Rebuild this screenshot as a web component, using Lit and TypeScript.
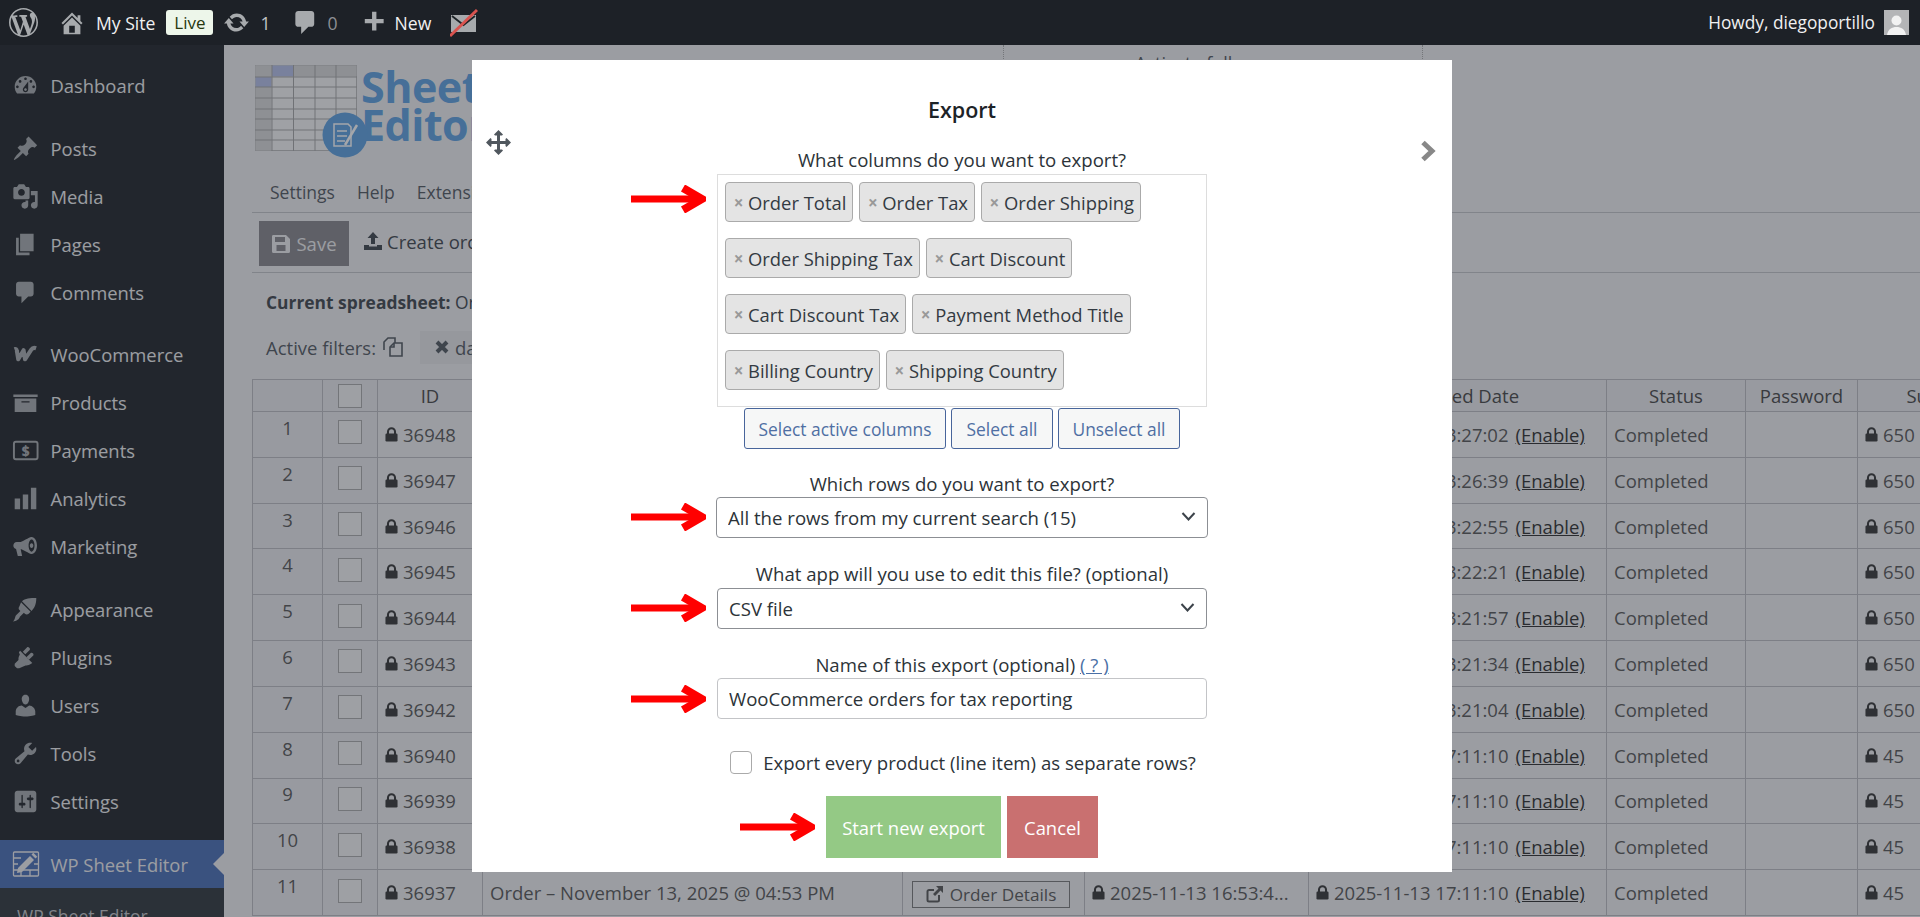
import { LitElement, html, css } from "lit";
import { customElement } from "lit/decorators.js";

const P = {
  wp: "M20 10c0-5.510-4.490-10-10-10C4.480 0 0 4.490 0 10c0 5.520 4.480 10 10 10 5.510 0 10-4.480 10-10zM7.780 15.370L4.370 6.220c.55-.02 1.170-.08 1.170-.08.5-.06.44-1.130-.06-1.110 0 0-1.450.11-2.370.11-.18 0-.37 0-.58-.01C4.120 2.690 6.890 1.030 10 1.030c2.320 0 4.430.87 6.030 2.340-.68-.11-1.650.39-1.650 1.580 0 .74.45 1.360.9 2.100.35.61.55 1.360.55 2.460 0 1.490-1.400 5-1.400 5l-3.030-8.370c.54-.02.82-.17.82-.17.5-.05.44-1.250-.06-1.220 0 0-1.440.12-2.380.12-.87 0-2.330-.12-2.330-.12-.5-.03-.56 1.200-.06 1.220l.92.08 1.260 3.410zM17.410 10c.24-.64.74-1.870.43-4.250.7 1.290 1.050 2.710 1.050 4.250 0 3.290-1.730 6.240-4.400 7.780.97-2.590 1.940-5.200 2.920-7.780zM6.100 18.090C3.120 16.650 1.110 13.530 1.110 10c0-1.300.23-2.480.72-3.590C3.250 10.300 4.670 14.200 6.100 18.090zm4.030-6.630l2.580 6.980c-.85.290-1.770.45-2.710.45-.79 0-1.570-.11-2.290-.33.81-2.380 1.620-4.740 2.420-7.100z",
  home: "M16 8.500l1.530 1.530-1.060 1.060L10 4.620l-6.470 6.470-1.060-1.060L10 2.500l4 4v-2h2v4zm-6-2.460l6 5.990V18H4v-5.970zM12 17v-5H8v5h4z",
  updates: "M10.200 3.280c3.530 0 6.430 2.610 6.920 6h2.080l-3.500 4-3.500-4h2.320c-.45-1.970-2.210-3.440-4.320-3.440-1.450 0-2.730.71-3.540 1.780L4.950 5.660C6.230 4.200 8.110 3.280 10.200 3.280zm-.4 13.440c-3.520 0-6.430-2.610-6.920-6H.8l3.500-4c1.170 1.330 2.330 2.670 3.500 4H5.480c.45 1.970 2.210 3.440 4.320 3.440 1.450 0 2.730-.71 3.540-1.780l1.710 1.950c-1.280 1.460-3.150 2.390-5.250 2.390z",
  comment: "M5 2h9c1.100 0 2 .9 2 2v7c0 1.100-.9 2-2 2h-2l-5 5v-5H5c-1.100 0-2-.9-2-2V4c0-1.100.9-2 2-2z",
  plus: "M17 7.500v3h-5v5H9v-5H4v-3h5v-5h3v5h5z",
  dashboard: "M3.760 16h12.480c1.100-1.370 1.760-3.110 1.760-5 0-4.420-3.580-8-8-8s-8 3.580-8 8c0 1.890.66 3.630 1.760 5zM10 4c.55 0 1 .45 1 1s-.45 1-1 1-1-.45-1-1 .45-1 1-1zM6 6c.55 0 1 .45 1 1s-.45 1-1 1-1-.45-1-1 .45-1 1-1zm8 0c.55 0 1 .45 1 1s-.45 1-1 1-1-.45-1-1 .45-1 1-1zm-5.370 5.550L12 7v6c0 1.100-.9 2-2 2s-2-.9-2-2c0-.57.24-1.080.63-1.450zM4 10c.55 0 1 .45 1 1s-.45 1-1 1-1-.45-1-1 .45-1 1-1zm12 0c.55 0 1 .45 1 1s-.45 1-1 1-1-.45-1-1 .45-1 1-1zm-5 3c0-.55-.45-1-1-1s-1 .45-1 1 .45 1 1 1 1-.45 1-1z",
  pin: "M10.440 3.020l1.820-1.820 6.360 6.350-1.830 1.820c-1.050-.68-2.480-.57-3.410.36l-.75.75c-.92.930-1.040 2.350-.35 3.410l-1.830 1.820-2.410-2.410-2.800 2.790c-.42.420-3.380 2.710-3.800 2.290s1.860-3.390 2.280-3.810l2.790-2.790L4.100 9.360l1.830-1.820c1.050.69 2.480.57 3.400-.36l.75-.75c.93-.92 1.050-2.350.36-3.410z",
  media: "M13 11V4c0-.55-.45-1-1-1h-1.670L9 1H5L3.670 3H2c-.55 0-1 .45-1 1v7c0 .55.45 1 1 1h10c.55 0 1-.45 1-1zM7 4.500c1.380 0 2.500 1.120 2.500 2.500S8.380 9.500 7 9.500 4.500 8.380 4.500 7 5.620 4.500 7 4.500zM14 6h5v10.500c0 1.380-1.120 2.500-2.500 2.500S14 17.880 14 16.500s1.120-2.500 2.500-2.500c.17 0 .34.020.5.050V9h-3V6zm-4 8.050V13h2v3.500c0 1.380-1.120 2.500-2.500 2.500S7 17.880 7 16.500 8.120 14 9.500 14c.17 0 .34.020.5.050z",
  page: "M6 15V2h10v13H6zm-1 1h8v2H3V5h2v11z",
  archive: "M19 4v2H1V4h18zM2 7h16v10H2V7zm11 3V9H7v1h6z",
  bars: "M18 18V2h-4v16h4zm-6 0V7H8v11h4zm-6 0v-8H2v8h4z",
  mega: "M14.500 3c-1.200 0-2 .8-8 3.700H3.500C2.100 6.700 1 7.900 1 9.300c0 1.200.8 2.200 2 2.500l1.300 5.200h3.200L6.400 12h.6c5.500 2.600 6.400 3.500 7.500 3.500 2.300 0 4-2.700 4-6.200S16.800 3 14.500 3zm0 1.800c1.200 0 2.200 2 2.200 4.500s-1 4.500-2.200 4.500-2.200-2-2.200-4.500 1-4.500 2.200-4.500zm0 2.700c-.8 0-1.300.8-1.300 1.800s.5 1.800 1.300 1.800 1.300-.8 1.300-1.800-.5-1.800-1.300-1.800z",
  brush: "M14.480 11.060L7.410 3.970C9.600 1.800 13.500 1.500 18 1.500c0 4.500-1.300 7.400-3.520 9.560zM6.700 4.680l7.070 7.070-1.410 1.410c-.78.78-2.050.78-2.830 0l-.71-.71-3 3c-.2 1.500-2.500 3.500-5.300 3.500 1.600-1 1.600-2.800 2-3.800.2-.5.5-.8.700-1l3-3-.71-.71c-.78-.78-.78-2.050 0-2.830z",
  plug: "M13.110 4.360L9.870 7.600 8 5.730l3.240-3.240c.35-.34 1.050-.2 1.560.32.52.51.66 1.210.31 1.550zm-8 1.770l.91-1.120 9.010 9.010-1.190.84c-.71.71-2.630 1.160-3.820 1L5.350 18H3.730L2 16.270v-1.620l2.810-2.780c-.17-1.200.29-3.120 1-3.830l-.7-1.910zm5.530 3.690l3.240-3.240c.35-.34 1.050-.2 1.560.31.52.51.66 1.210.31 1.560l-3.240 3.240z",
  users: "M10 9.250c-2.270 0-2.730-3.440-2.730-3.440C7 4.020 7.820 2 9.970 2c2.160 0 2.980 2.020 2.710 3.810 0 0-.41 3.440-2.680 3.440zm0 2.570L12.720 10c2.390 0 4.520 2.330 4.520 4.530v2.490s-3.650 1.130-7.240 1.130c-3.650 0-7.240-1.130-7.240-1.130v-2.490c0-2.250 1.940-4.480 4.470-4.480z",
  tools: "M16.680 9.770c-1.340 1.340-3.300 1.670-4.950.99l-5.410 6.520c-.99.99-2.590.99-3.570 0-.99-.99-.99-2.590 0-3.570l6.520-5.420c-.68-1.650-.35-3.610.99-4.950 1.280-1.280 3.120-1.620 4.720-1.060l-2.890 2.890 2.820 2.820 2.860-2.870c.53 1.580.18 3.420-1.090 4.650zM3.810 16.210c.4.390 1.040.39 1.430 0 .4-.4.4-1.040 0-1.430-.39-.4-1.030-.4-1.430 0-.39.39-.39 1.030 0 1.430z",
  settings: "M18 16V4c0-1.100-.9-2-2-2H4c-1.100 0-2 .9-2 2v12c0 1.100.9 2 2 2h12c1.100 0 2-.9 2-2zM8 11h1c.55 0 1 .45 1 1s-.45 1-1 1H8v1.500c0 .28-.22.5-.5.5s-.5-.22-.5-.5V13H6c-.55 0-1-.45-1-1s.45-1 1-1h1V5.500c0-.28.22-.5.5-.5s.5.22.5.5V11zm5-2h-1c-.55 0-1-.45-1-1s.45-1 1-1h1V5.500c0-.28.22-.5.5-.5s.5.22.5.5V7h1c.55 0 1 .45 1 1s-.45 1-1 1h-1v5.500c0 .28-.22.5-.5.5s-.5-.22-.5-.5V9z",
};

const dash = (d: string, cls = "ic") =>
  html`<svg class=${cls} viewBox="0 0 20 20"><path fill="currentColor" fill-rule="evenodd" d=${d}></path></svg>`;

const lock = html`<svg class="lock" viewBox="0 0 14 16"><path fill="none" stroke="currentColor" stroke-width="2.2" d="M3.200 8V5a3.800 3.800 0 0 1 7.600 0v3"></path><rect x="0.500" y="7" width="13" height="8.500" rx="1.300" fill="currentColor"></rect></svg>`;

const arrow = (cls: string) =>
  html`<svg class="arrow ${cls}" viewBox="0 0 75 28"><path d="M0 14H68" stroke="#f00" stroke-width="7" fill="none"></path><path d="M52 3L71 14L52 25" stroke="#f00" stroke-width="8" fill="none"></path></svg>`;

const payIcon = html`<svg class="ic" viewBox="0 0 28 28"><rect x="2" y="5" width="24.500" height="18" rx="2" fill="none" stroke="currentColor" stroke-width="2"></rect><text x="14.200" y="19.500" text-anchor="middle" font-family="Open Sans, sans-serif" font-weight="800" font-size="14" fill="currentColor">$</text></svg>`;

const wooIcon = html`<svg class="ic" viewBox="0 0 28 28"><path d="M2.500 8.500c1.500-.5 2.300 0 2.500 1.500L6.500 19 12 9.500 13.500 19 20 9c1-1.500 3-2.200 5-1.500" fill="none" stroke="currentColor" stroke-width="4.200" stroke-linejoin="round"></path></svg>`;

const sheetIcon = html`<svg class="ic" viewBox="0 0 28 28" fill="none" stroke="currentColor" stroke-width="1.300"><rect x="1.500" y="2" width="25" height="24" rx="1"></rect><path d="M1.500 8H9M1.500 14H6M1.500 20H26.500M9 20V26M18 20V26M26.500 14H22"></path><path d="M6 18L18 6l4 4-12 12-5 1z" fill="currentColor" stroke="none"></path><path d="M19.500 4.500l1.800-1.800 4 4-1.800 1.800z" fill="currentColor" stroke="none"></path></svg>`;

const sideGroups: { icon: any; label: string }[][] = [
  [{ icon: dash(P.dashboard), label: "Dashboard" }],
  [
    { icon: dash(P.pin), label: "Posts" },
    { icon: dash(P.media), label: "Media" },
    { icon: dash(P.page), label: "Pages" },
    { icon: dash(P.comment), label: "Comments" },
  ],
  [
    { icon: wooIcon, label: "WooCommerce" },
    { icon: dash(P.archive), label: "Products" },
    { icon: payIcon, label: "Payments" },
    { icon: dash(P.bars), label: "Analytics" },
    { icon: dash(P.mega), label: "Marketing" },
  ],
  [
    { icon: dash(P.brush), label: "Appearance" },
    { icon: dash(P.plug), label: "Plugins" },
    { icon: dash(P.users), label: "Users" },
    { icon: dash(P.tools), label: "Tools" },
    { icon: dash(P.settings), label: "Settings" },
  ],
];

const rows = [
  ["36948", "2025-11-14 03:27:02", "650"],
  ["36947", "2025-11-14 03:26:39", "650"],
  ["36946", "2025-11-14 03:22:55", "650"],
  ["36945", "2025-11-14 03:22:21", "650"],
  ["36944", "2025-11-14 03:21:57", "650"],
  ["36943", "2025-11-14 03:21:34", "650"],
  ["36942", "2025-11-14 03:21:04", "650"],
  ["36940", "2025-11-13 17:11:10", "45"],
  ["36939", "2025-11-13 17:11:10", "45"],
  ["36938", "2025-11-13 17:11:10", "45"],
  ["36937", "2025-11-13 17:11:10", "45"],
];

const chips = [
  "Order Total", "Order Tax", "Order Shipping", "Order Shipping Tax", "Cart Discount",
  "Cart Discount Tax", "Payment Method Title", "Billing Country", "Shipping Country",
];

@customElement("app-root")
export class AppRoot extends LitElement {
  static styles = css`
    :host { display: block; font-family: "Open Sans", "Noto Sans", sans-serif; }
    * { box-sizing: border-box; }
    .page { position: relative; width: 1920px; height: 917px; overflow: hidden; background: #f0f0f1; display: flex; flex-direction: column; }

    .bar { position: relative; z-index: 3; height: 45px; flex: none; background: #1d2127; color: #f0f0f1; display: flex; align-items: center; font-size: 17.600px; padding-right: 11px; }
    .bar svg { display: block; color: #a7aaad; flex: none; }
    .b-wp { width: 29px; height: 29px; margin-left: 9px; }
    .b-home { width: 28px; height: 28px; margin-left: 20px; }
    .b-site { margin-left: 10px; }
    .b-live { margin-left: 11px; width: 47px; height: 25px; background: #edf6ea; color: #27380f; border-radius: 3px; display: flex; align-items: center; justify-content: center; font-size: 17px; }
    .b-up { width: 27px; height: 27px; margin-left: 10px; }
    .b-n { margin-left: 10px; color: #c3c4c7; }
    .b-com { width: 29px; height: 29px; margin-left: 20px; }
    .b-z { margin-left: 8px; color: #8c8f94; }
    .b-plus { width: 29px; height: 29px; margin-left: 21px; }
    .b-new { margin-left: 7px; }
    .b-mail { width: 28px; height: 30px; margin-left: 19px; }
    .b-howdy { margin-left: auto; font-size: 17.300px; }
    .b-av { width: 25px; height: 25px; margin-left: 9px; }

    .body { flex: 1; display: flex; min-height: 0; }
    .side { width: 224px; flex: none; background: #1d2125; color: #f0f0f1; padding-top: 17px; font-size: 18.400px; }
    .group { margin-bottom: 15px; }
    .group:nth-child(2) { margin-bottom: 14.400px; }
    .group:nth-child(3) { margin-bottom: 15.600px; }
    .item { height: 47.900px; display: flex; align-items: center; padding-left: 12px; gap: 11.500px; white-space: nowrap; position: relative; }
    .ic { width: 27px; height: 27px; flex: none; color: #a7aaad; display: block; }
    .item.cur { background: #466cb5; color: #f0f0f1; margin-top: 1px; gap: 10.500px; }
    .item.cur .ic { color: #f0f0f1; width: 28px; height: 28px; }
    .item.cur::after { content: ""; position: absolute; right: 0; top: 13px; border: 11px solid transparent; border-left: 0; border-right-color: #f0f0f1; }
    .sub { background: #2c3338; color: #c3c4c7; padding: 16px 0 0 17px; font-size: 17.500px; height: 60px; white-space: nowrap; }

    .main { flex: 1; min-width: 0; color: #50575e; font-size: 18.500px; display: flex; flex-direction: column; padding-left: 28px; white-space: nowrap; }
    .top { height: 119px; display: flex; flex: none; }
    .logo { width: 751px; flex: none; display: flex; padding: 20px 0 0 3px; }
    .logo svg { width: 132px; height: 112px; flex: none; margin-right: -26px; position: relative; }
    .brand { color: #5b9fe0; font-weight: 700; font-size: 43px; line-height: 38px; margin-top: 3px; letter-spacing: -0.500px; }
    .notice { width: 420px; flex: none; height: 60px; border: 1px dotted #aaa; border-top: 0; padding: 6px 0 0 131px; color: #50575e; font-size: 18px; }
    .tabs { flex: none; height: 49px; border-bottom: 1px solid #c3c4c7; display: flex; align-items: center; padding-left: 18px; gap: 22px; color: #50575e; font-size: 17.500px; padding-top: 8px; }
    .tools { flex: none; height: 60px; border-bottom: 1px solid #c3c4c7; display: flex; align-items: flex-start; padding: 8px 0 0 7px; }
    .save { width: 90px; height: 45px; background: #87858a; color: #f0f0f1; display: flex; align-items: center; justify-content: center; gap: 5px; }
    .save svg { width: 20px; height: 20px; }
    .create { margin-left: 14px; height: 40px; display: flex; align-items: center; gap: 4px; color: #3c434a; }
    .create svg { width: 20px; height: 20px; }
    .cur-line { flex: none; margin: 16px 0 0 14px; line-height: 26px; color: #3c434a; font-size: 17.400px; }
    .cur-line b { font-weight: 700; }
    .filters { flex: none; height: 36px; margin: 14px 0 0 14px; display: flex; align-items: center; color: #50575e; }
    .filters svg.copy { width: 24px; height: 24px; margin: 0 0 0 5px; flex: none; }
    .fchip { margin-left: 15px; width: 120px; height: 33px; background: #e7e7e9; display: flex; align-items: center; padding-left: 15px; gap: 6px; color: #50575e; }
    .fchip svg { width: 14px; height: 14px; flex: none; }

    .table { flex: none; margin-top: 14px; display: grid; width: 1738px; border-left: 1px solid #bbbbc0; border-top: 1px solid #bbbbc0;
      grid-template-columns: 70px 55px 105px 420px 182px 224px 298px 139px 112px 170px;
      grid-auto-rows: 45.820px; grid-template-rows: 32px; color: #555; font-size: 18.500px; }
    .c { border-right: 1px solid #bbbbc0; border-bottom: 1px solid #bbbbc0; display: flex; align-items: center; padding-left: 7px; overflow: hidden; white-space: nowrap; min-width: 0; }
    .h { justify-content: center; padding: 0; background: #ebebed; color: #444; }
    .h.cd { padding-right: 17px; }
    .num { justify-content: center; padding: 0 0 14px; background: #ebebed; color: #555; }
    .chk { justify-content: center; padding: 0 0 4px; background: #ebebed; }
    .chk.h { padding: 0; }
    .box { width: 24px; height: 24px; border: 1px solid #aaa; background: #f4f4f4; }
    .lock { width: 13px; height: 15px; flex: none; color: #333; margin-right: 5px; }
    .c a { color: #2b2b2b; text-decoration: underline; margin-left: 7px; }
    .od { margin-left: 2px; width: 158px; height: 27px; border: 1px solid #777; display: flex; align-items: center; justify-content: center; gap: 6px; color: #555; font-size: 17.200px; margin-top: 3px; }
    .od svg { width: 18px; height: 18px; }

    .overlay { position: absolute; inset: 45px 0 0 0; background: rgba(43, 46, 56, 0.427); z-index: 1; }

    .modal { position: absolute; z-index: 2; left: 472px; top: 60px; width: 980px; height: 812px; background: #fff; color: #2c3338; display: flex; flex-direction: column; align-items: center; font-size: 18.600px; padding-top: 35px; }
    .title { font-size: 21.500px; font-weight: 600; line-height: 30px; color: #1d2327; }
    .lab { line-height: 24px; white-space: nowrap; }
    .l1 { margin-top: 23px; }
    .l2 { margin-top: 23px; }
    .l3 { margin-top: 24px; }
    .l4 { margin-top: 24px; }
    .lab a { color: #4a6fa5; text-decoration: underline; }
    .move { position: absolute; left: 14px; top: 70px; width: 25px; height: 25px; color: #50575e; }
    .next { position: absolute; left: 947px; top: 80px; width: 18px; height: 22px; }
    .arrow { position: absolute; left: 159px; width: 75px; height: 28px; }
    .a1 { top: 125px; } .a2 { top: 443px; } .a3 { top: 534px; } .a4 { top: 625px; } .a5 { top: 753px; left: 268px; }
    .chips { margin-top: 2px; width: 490px; height: 233px; border: 1px solid #ddd; padding: 7px 7px 16px; display: flex; flex-wrap: wrap; align-content: flex-start; gap: 16px 6px; font-size: 18.400px; }
    .chip { height: 40px; background: #e4e4e4; border: 1px solid #aaa; border-radius: 4px; display: flex; align-items: center; padding-right: 6px; white-space: nowrap; color: #333a42; }
    .chip i { font-style: normal; font-weight: 700; color: #999; width: 22px; text-align: center; padding-left: 3px; margin-top: 1px; font-size: 17px; }
    .acts { display: flex; gap: 5px; margin-top: 1px; }
    .acts button { height: 41px; font: inherit; font-size: 17.400px; color: #4f6fa3; background: #f6f7f7; border: 1px solid #48659b; border-radius: 3px; padding: 0; }
    .w1 { width: 202px; } .w2 { width: 102px; } .w3 { width: 122px; }
    .sel { position: relative; width: 490px; margin-top: 2px; }
    .sel.wide { width: 492px; margin-top: 1px; }
    .sel select, .inp { display: block; width: 100%; height: 41px; appearance: none; font: inherit; color: #2c3338; background: #fff; border: 1px solid #8c8f94; border-radius: 4px; padding: 0 11px; }
    .sel svg { position: absolute; right: 12px; top: 14px; width: 15px; height: 11px; }
    .inp { width: 490px; margin-top: 1px; border-color: #c3c4c7; }
    .ckrow { margin-top: 31px; height: 24px; display: flex; align-items: center; gap: 11px; white-space: nowrap; padding-left: 2px; }
    .ckrow input { appearance: none; margin: 0; width: 22px; height: 23px; border: 1px solid #aaa; border-radius: 4px; background: #fff; }
    .go { margin-top: 22px; display: flex; gap: 6px; }
    .go button { height: 62px; border: 0; font: inherit; font-size: 18.400px; color: #fff; padding: 0; }
    .g { width: 175px; background: #94c985; }
    .r { width: 91px; background: #c97070; }
  `;

  render() {
    return html`<div class="page">
      <div class="bar">
        ${dash(P.wp, "b-wp")}
        ${dash(P.home, "b-home")}
        <span class="b-site">My Site</span>
        <span class="b-live">Live</span>
        ${dash(P.updates, "b-up")}
        <span class="b-n">1</span>
        ${dash(P.comment, "b-com")}
        <span class="b-z">0</span>
        ${dash(P.plus, "b-plus")}
        <span class="b-new">New</span>
        <svg class="b-mail" viewBox="0 0 28 30"><rect x="1" y="7" width="25" height="17" fill="#a7aaad"></rect><path d="M2 8l11.500 9L25 8" fill="none" stroke="#1d2327" stroke-width="1.800"></path><path d="M0 28L27 2" stroke="#d9534f" stroke-width="3"></path></svg>
        <span class="b-howdy">Howdy, diegoportillo</span>
        <svg class="b-av" viewBox="0 0 25 25"><rect width="25" height="25" fill="#b4b5b7"></rect><circle cx="12.500" cy="10.500" r="5" fill="#f2f2f2"></circle><path d="M3 25c1-6 5-8 9.500-8s8.500 2 9.500 8z" fill="#f2f2f2"></path></svg>
      </div>

      <div class="body">
        <nav class="side">
          ${sideGroups.map(
            (g) => html`<div class="group">${g.map((i) => html`<div class="item">${i.icon}<span>${i.label}</span></div>`)}</div>`
          )}
          <div class="item cur">${sheetIcon}<span>WP Sheet Editor</span></div>
          <div class="sub">WP Sheet Editor</div>
        </nav>

        <main class="main">
          <div class="top">
            <div class="logo">
              <svg viewBox="0 0 132 112">
                <rect x="0.500" y="0.500" width="101" height="85" fill="#f7f7f7" stroke="#bbb"></rect>
                <rect x="0.500" y="0.500" width="16" height="85" fill="#d9d9d9"></rect>
                <rect x="0.500" y="0.500" width="101" height="11" fill="#d9d9d9"></rect>
                <rect x="17" y="0.500" width="22" height="11" fill="#b4bfe8"></rect>
                <rect x="0.500" y="12" width="16" height="10" fill="#b4bfe8"></rect>
                <path d="M17 0V86M38.500 0V86M60 0V86M81 0V86M0 12H102M0 22H102M0 33H102M0 44H102M0 54H102M0 65H102M0 75H102" stroke="#a5a5a5" stroke-width="1" fill="none"></path>
                <circle cx="90" cy="70" r="22.500" fill="#5b9fe0"></circle>
                <path d="M79 59h14l3 3v19H79z" fill="none" stroke="#fff" stroke-width="1.500"></path>
                <path d="M82 66h10M82 71h10M82 76h8" stroke="#fff" stroke-width="1.500"></path>
                <path d="M90 80l12-20" stroke="#fff" stroke-width="2.500"></path>
              </svg>
              <div class="brand">Sheet<br />Editor</div>
            </div>
            <div class="notice">Activate full</div>
          </div>
          <div class="tabs"><span>Settings</span><span>Help</span><span>Extensions</span></div>
          <div class="tools">
            <div class="save">
              <svg viewBox="0 0 20 20"><path fill="currentColor" fill-rule="evenodd" d="M2 1h13l4 4v12.500a1.500 1.500 0 0 1-1.500 1.500h-15A1.500 1.500 0 0 1 1 17.500v-15A1.500 1.500 0 0 1 2 1zm2 2v5h10V3zm1.500 8v6h9v-6z"></path></svg>
              <span>Save</span>
            </div>
            <div class="create">
              <svg viewBox="0 0 20 20"><path fill="currentColor" d="M10 1l5.500 6H12v6H8V7H4.500zM1 14h5v1.500h8V14h5v5H1z"></path></svg>
              <span>Create order</span>
            </div>
          </div>
          <div class="cur-line"><b>Current spreadsheet:</b> Orders</div>
          <div class="filters">
            <span>Active filters:</span>
            <svg class="copy" viewBox="0 0 24 24" fill="none" stroke="currentColor" stroke-width="1.600"><path d="M3 15V7l4-4h7v5"></path><path d="M9 12l4-4h8v13H9z"></path><path d="M13 8v4H9"></path></svg>
            <div class="fchip"><svg viewBox="0 0 14 14"><path d="M2 2l10 10M12 2L2 12" stroke="currentColor" stroke-width="4" fill="none"></path></svg><span>date</span></div>
          </div>
          <div class="table">
            <div class="c h"></div>
            <div class="c h chk"><div class="box"></div></div>
            <div class="c h">ID</div>
            <div class="c h"></div>
            <div class="c h"></div>
            <div class="c h"></div>
            <div class="c h cd">Completed Date</div>
            <div class="c h">Status</div>
            <div class="c h">Password</div>
            <div class="c h">Subtotal</div>
            ${rows.map((r, i) => {
              const last = i === rows.length - 1;
              return html`
                <div class="c num">${i + 1}</div>
                <div class="c chk"><div class="box"></div></div>
                <div class="c">${lock}${r[0]}</div>
                <div class="c">${last ? "Order – November 13, 2025 @ 04:53 PM" : ""}</div>
                <div class="c">${last
                  ? html`<div class="od"><svg viewBox="0 0 18 18"><path fill="none" stroke="currentColor" stroke-width="2" d="M13 10v5a1.500 1.500 0 0 1-1.500 1.500H3A1.500 1.500 0 0 1 1.500 15V6.500A1.500 1.500 0 0 1 3 5h5"></path><path fill="currentColor" d="M10 1h7v7l-2.500-2.500L9 11 7 9l5.500-5.500z"></path></svg><span>Order Details</span></div>`
                  : ""}</div>
                <div class="c">${last ? html`${lock}2025-11-13 16:53:4...` : ""}</div>
                <div class="c">${lock}${r[1]}<a>(Enable)</a></div>
                <div class="c">Completed</div>
                <div class="c"></div>
                <div class="c">${lock}${r[2]}</div>
              `;
            })}
          </div>
        </main>
      </div>

      <div class="overlay"></div>

      <section class="modal">
        <svg class="move" viewBox="0 0 25 25"><path fill="currentColor" d="M12.500 0l4.500 4.500-1 1h-2v5.500h5.500v-2l1-1 4.500 4.500-4.500 4.500-1-1v-2H14v5.500h2l1 1-4.500 4.500L8 20.500l1-1h2V14H5.500v2l-1 1L0 12.500 4.500 8l1 1v2H11V5.500H9l-1-1z"></path></svg>
        <svg class="next" viewBox="0 0 18 22"><path d="M4 2.500L13 11l-9 8.500" fill="none" stroke="#888" stroke-width="5"></path></svg>
        ${arrow("a1")}${arrow("a2")}${arrow("a3")}${arrow("a4")}${arrow("a5")}
        <div class="title">Export</div>
        <div class="lab l1">What columns do you want to export?</div>
        <div class="chips">
          ${chips.map((c) => html`<div class="chip"><i>×</i><span>${c}</span></div>`)}
        </div>
        <div class="acts">
          <button class="w1">Select active columns</button>
          <button class="w2">Select all</button>
          <button class="w3">Unselect all</button>
        </div>
        <div class="lab l2">Which rows do you want to export?</div>
        <div class="sel wide">
          <select><option>All the rows from my current search (15)</option></select>
          <svg viewBox="0 0 15 11"><path d="M1.500 2l6 6.500 6-6.500" fill="none" stroke="#3c434a" stroke-width="2"></path></svg>
        </div>
        <div class="lab l3">What app will you use to edit this file? (optional)</div>
        <div class="sel">
          <select><option>CSV file</option></select>
          <svg viewBox="0 0 15 11"><path d="M1.500 2l6 6.500 6-6.500" fill="none" stroke="#3c434a" stroke-width="2"></path></svg>
        </div>
        <div class="lab l4">Name of this export (optional) <a>( ? )</a></div>
        <input class="inp" .value=${"WooCommerce orders for tax reporting"} />
        <label class="ckrow"><input type="checkbox" /><span>Export every product (line item) as separate rows?</span></label>
        <div class="go">
          <button class="g">Start new export</button>
          <button class="r">Cancel</button>
        </div>
      </section>
    </div>`;
  }
}
